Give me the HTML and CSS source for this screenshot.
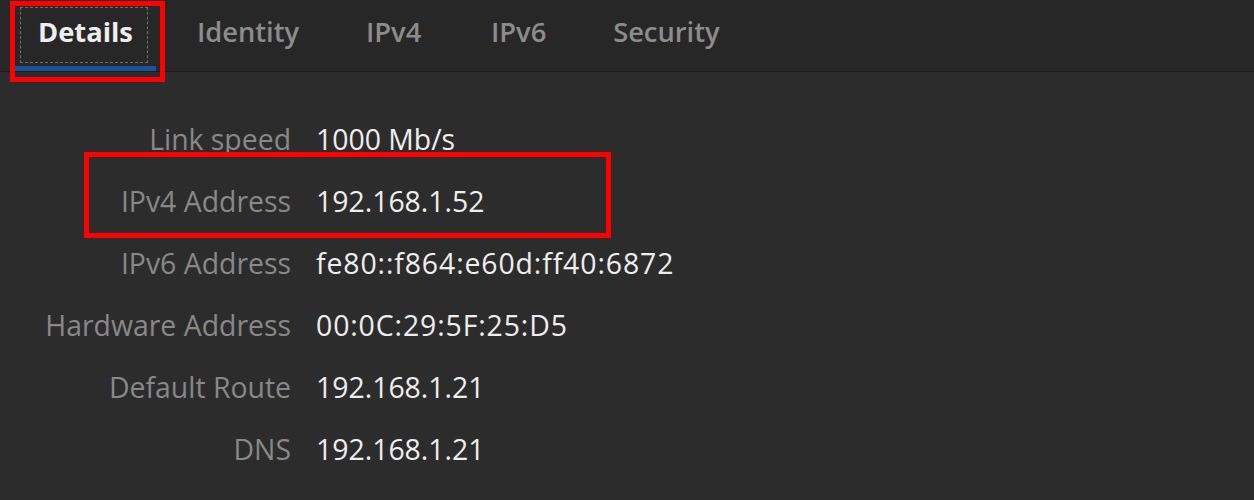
FILE: index.html
```html
<!DOCTYPE html>
<html lang="en">
<head>
<meta charset="utf-8">
<title>Details</title>
<link rel="stylesheet" href="styles.css">
</head>
<body>
<header class="tabs">
  <div class="tab active"><span class="tab-label">Details</span><span class="annot annot-tab"></span></div>
  <div class="tab"><span class="tab-label">Identity</span></div>
  <div class="tab"><span class="tab-label">IPv4</span></div>
  <div class="tab"><span class="tab-label">IPv6</span></div>
  <div class="tab"><span class="tab-label">Security</span></div>
</header>
<main class="details">
  <div class="grid">
    <div class="label">Link speed</div><div class="value">1000 Mb/s</div>
    <div class="label">IPv4 Address</div><div class="value">192.168.1.52</div>
    <div class="label">IPv6 Address</div><div class="value addr">fe80::f864:e60d:ff40:6872</div>
    <div class="label">Hardware Address</div><div class="value addr">00:0C:29:5F:25:D5</div>
    <div class="label">Default Route</div><div class="value">192.168.1.21</div>
    <div class="label">DNS</div><div class="value">192.168.1.21</div>
  </div>
  <span class="annot annot-row"></span>
</main>
</body>
</html>
```
FILE: styles.css
```css
html, body {
  margin: 0;
  padding: 0;
  background: #2c2c2c;
  height: 100%;
  overflow: hidden;
}
body {
  font-family: "Open Sans", "Noto Sans", sans-serif;
  font-size: 28.4px;
  color: #eeeeee;
}
.tabs {
  display: flex;
  gap: 18px;
  padding-left: 15px;
  height: 71px;
  background: #272727;
  border-bottom: 1px solid #1c1c1c;
}
.tab {
  position: relative;
  box-sizing: border-box;
  min-width: 107px;
  height: 71px;
  padding: 0 23px;
  text-align: center;
  font-size: 27.3px;
  line-height: 64px;
  color: #8c8c8c;
  font-weight: 600;
}
.tab.active {
  color: #eeeeee;
  font-weight: 700;
  box-shadow: inset 0 -5px 0 #1b5299;
}
.tab.active::after {
  content: "";
  position: absolute;
  top: 7px;
  left: 5px;
  right: 8px;
  bottom: 8px;
  border: 1px dashed #6e6e6e;
}
.annot {
  position: absolute;
  border: 5px solid #ff0000;
  box-sizing: border-box;
  pointer-events: none;
}
.annot-tab {
  top: 1px;
  left: -5px;
  right: -9px;
  height: 81px;
  z-index: 2;
}
.details {
  position: relative;
  padding-top: 36px;
}
.grid {
  display: grid;
  grid-template-columns: 291px auto;
  column-gap: 25px;
  line-height: 62px;
}
.label {
  justify-self: end;
  color: #888888;
}
.value {
  color: #eeeeee;
}
.value.addr {
  letter-spacing: 0.9px;
}
.annot-row {
  top: 80px;
  left: 84px;
  width: 527px;
  height: 86px;
}
```
